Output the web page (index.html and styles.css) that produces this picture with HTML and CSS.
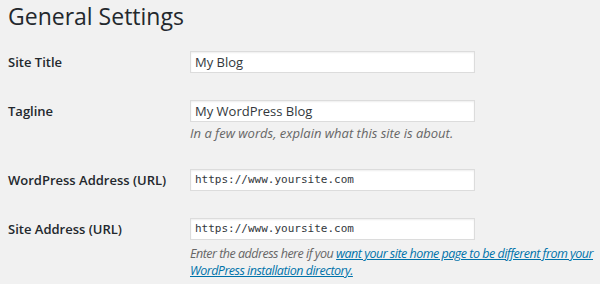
FILE: index.html
```html
<!DOCTYPE html>
<html lang="en">
<head>
<meta charset="utf-8">
<title>General Settings</title>
<link rel="stylesheet" href="styles.css">
</head>
<body>
<div class="wrap">
  <h1 class="title">General Settings</h1>
  <div class="form">
    <div class="row">
      <label class="label">Site Title</label>
      <div class="field">
        <div class="input">My Blog</div>
      </div>
    </div>
    <div class="row">
      <label class="label">Tagline</label>
      <div class="field">
        <div class="input">My WordPress Blog</div>
        <p class="desc">In a few words, explain what this site is about.</p>
      </div>
    </div>
    <div class="row">
      <label class="label">WordPress Address (URL)</label>
      <div class="field">
        <div class="input code">https://www.yoursite.com</div>
      </div>
    </div>
    <div class="row">
      <label class="label">Site Address (URL)</label>
      <div class="field">
        <div class="input code">https://www.yoursite.com</div>
        <p class="desc tight">Enter the address here if you <a class="link" href="#">want your site home page to be different from your WordPress installation directory.</a></p>
      </div>
    </div>
  </div>
</div>
</body>
</html>
```

FILE: styles.css
```css
html, body {
  margin: 0;
  padding: 0;
  background: #f1f1f1;
}
body {
  font-family: "Open Sans", "Noto Sans", sans-serif;
  color: #23282d;
  font-size: 13px;
}
.wrap {
  padding: 1px 2px 0 8px;
}
.title {
  margin: 0;
  font-size: 23px;
  font-weight: 400;
  line-height: 30px;
  color: #23282d;
}
.form {
  margin-top: 20px;
  display: flex;
  flex-direction: column;
  gap: 27px;
}
.row {
  display: flex;
  align-items: flex-start;
}
.label {
  width: 182px;
  flex: none;
  font-weight: 600;
  font-size: 13px;
  line-height: 22px;
  color: #23282d;
}
.field {
  flex: 1;
  min-width: 0;
}
.input {
  box-sizing: border-box;
  width: 285px;
  height: 22px;
  background: #fff;
  border: 1px solid #dcdcdc;
  box-shadow: inset 0 1px 2px rgba(0,0,0,0.07);
  padding: 0 4px;
  font-size: 13px;
  line-height: 20px;
  color: #32373c;
}
.input.code {
  font-family: "DejaVu Sans Mono", "Liberation Mono", monospace;
  font-size: 11px;
}
.desc {
  margin: 3px 0 0;
  font-style: italic;
  font-size: 13px;
  line-height: 17px;
  color: #666;
}
.desc.tight {
  margin-top: 5px;
  font-size: 12.5px;
  letter-spacing: -0.5px;
  line-height: 17px;
}
.link {
  color: #0073aa;
  text-decoration: underline;
}
```
